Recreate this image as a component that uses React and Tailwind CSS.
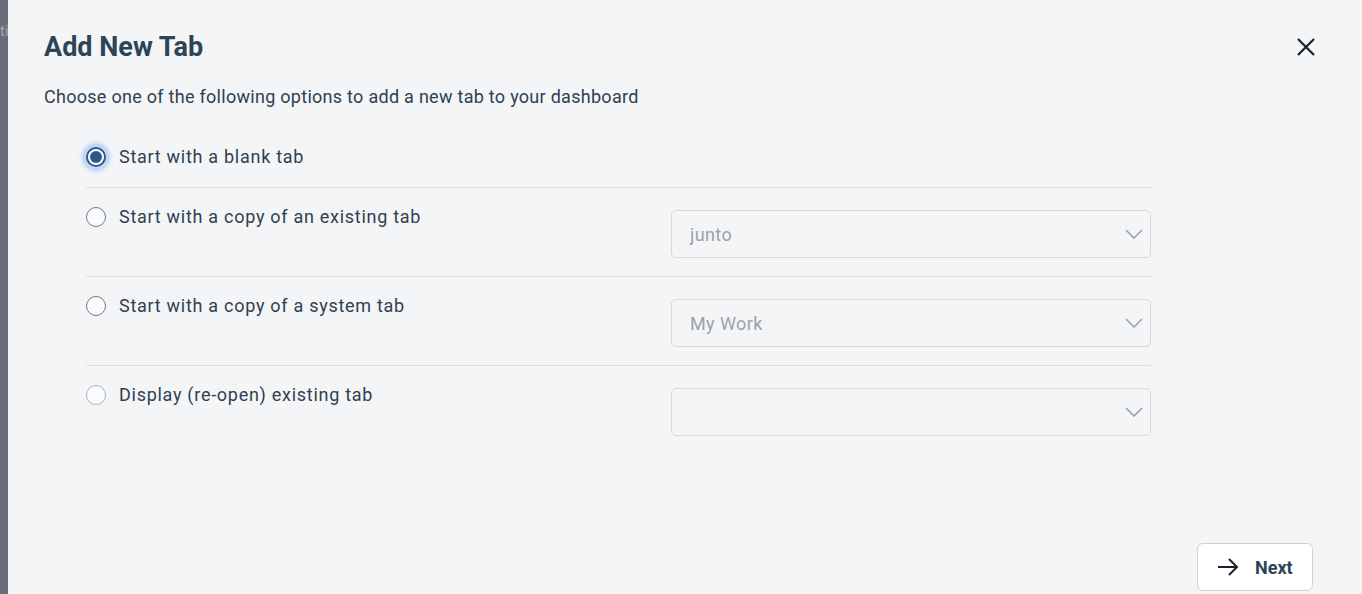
import { useState } from "react";

const options = [
  { id: "blank", label: "Start with a blank tab" },
  { id: "copy", label: "Start with a copy of an existing tab", select: "junto" },
  { id: "system", label: "Start with a copy of a system tab", select: "My Work" },
  { id: "reopen", label: "Display (re-open) existing tab", select: "", faded: true },
];

const Radio = ({ checked, faded }) =>
  checked ? (
    <span className="w-[20px] h-[20px] shrink-0 rounded-full border-2 border-[#2f5787] bg-white flex items-center justify-center shadow-[0_0_0_2px_#c4d8f8,0_0_5px_3px_#9bbcf2]">
      <span className="w-[12px] h-[12px] rounded-full bg-[#2f5787]" />
    </span>
  ) : (
    <span
      className={
        "w-[20px] h-[20px] shrink-0 rounded-full border-[1.5px] bg-[#fafbfc] " +
        (faded ? "border-[#aab2b9]" : "border-[#6f7780]")
      }
    />
  );

const Chevron = () => (
  <svg width="18" height="10" viewBox="0 0 18 10" fill="none">
    <path d="M1 1l8 8 8-8" stroke="#9aa3ab" strokeWidth="1.6" />
  </svg>
);

const App = () => {
  const [choice, setChoice] = useState("blank");

  return (
    <div className="flex w-full h-[594px] overflow-hidden font-['Roboto',sans-serif]">
      {/* dimmed page behind the dialog */}
      <div className="w-[8px] shrink-0 bg-[#6b6e7a] overflow-hidden">
        <div className="pt-[20px] text-[15px] text-[#a3a6ae] whitespace-nowrap">ti</div>
      </div>

      <div className="flex-1 bg-[#f4f5f7] flex flex-col pl-[36px] pr-[45px]">
        <div className="flex items-center justify-between pt-[31px]">
          <h2 className="text-[27px] leading-[32px] font-bold text-[#2b4557]">Add New Tab</h2>
          <button className="w-[22px] h-[22px] flex items-center justify-center">
            <svg width="20" height="20" viewBox="0 0 20 20" fill="none">
              <path d="M2 2l16 16M18 2L2 18" stroke="#15212d" strokeWidth="2.2" />
            </svg>
          </button>
        </div>

        <p className="mt-[22px] text-[18px] leading-[24px] text-[#2e4150] tracking-[0.28px]">
          Choose one of the following options to add a new tab to your dashboard
        </p>

        <div className="ml-[42px] w-[1065px] mt-[19px]">
          {options.map((o, i) => (
            <div
              key={o.id}
              className={
                "flex items-start justify-between pt-[17px] pb-[18px] " +
                (i < options.length - 1 ? "border-b border-[#dcdfe3]" : "")
              }
            >
              <label
                className="flex items-center gap-[13px] cursor-pointer"
                onClick={() => setChoice(o.id)}
              >
                <Radio checked={choice === o.id} faded={o.faded} />
                <span className="text-[18px] leading-[24px] tracking-[0.72px] text-[#2e4150]">
                  {o.label}
                </span>
              </label>
              {o.select !== undefined && (
                <div className="mt-[5px] w-[480px] h-[48px] rounded-[5px] border border-[#d5d8dc] bg-[#f4f5f7] flex items-center justify-between pl-[18px] pr-[7px]">
                  <span className="text-[18px] tracking-[0.4px] text-[#9aa3ab]">{o.select}</span>
                  <Chevron />
                </div>
              )}
            </div>
          ))}
        </div>

        <div className="flex-1" />
        <div className="flex justify-end pb-[3px] pr-[4px]">
          <button className="w-[116px] h-[48px] rounded-[6px] border border-[#cdd2d7] bg-white flex items-center pl-[19px] gap-[16px]">
            <svg width="22" height="18" viewBox="0 0 22 18" fill="none">
              <path d="M1 9h19M12 1l8 8-8 8" stroke="#15212d" strokeWidth="2" />
            </svg>
            <span className="text-[18px] font-bold text-[#2b4557]">Next</span>
          </button>
        </div>
      </div>
    </div>
  );
};

export default App;
